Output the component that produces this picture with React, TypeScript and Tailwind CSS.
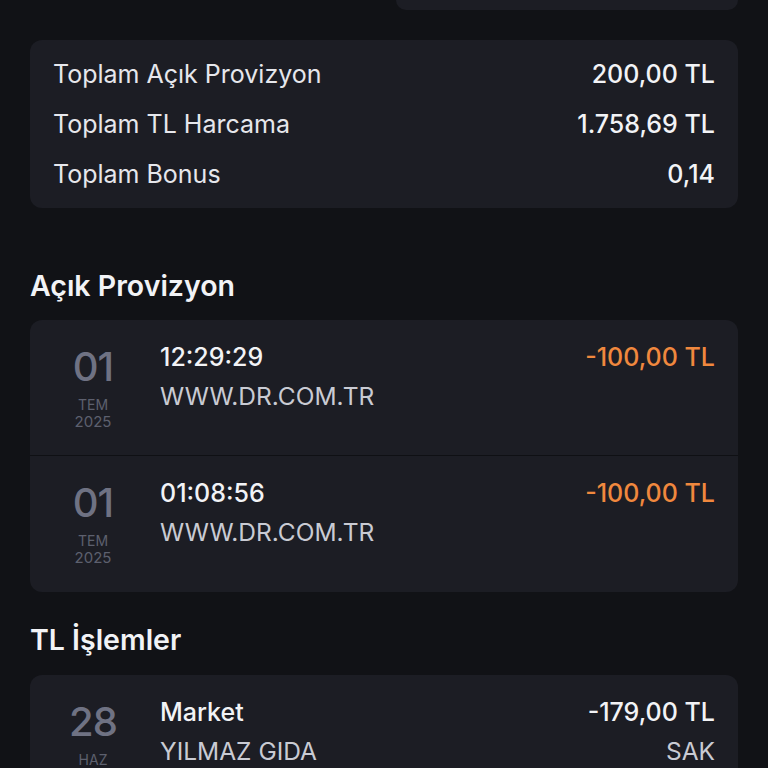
import React from "react";

const font = { fontFamily: "Inter, 'Noto Sans', sans-serif" };

function DateBlock({ day, mon, year }: { day: string; mon: string; year?: string }) {
  return (
    <div className="w-[80px] flex flex-col items-center shrink-0 pt-[5px]">
      <div className="text-[40px] leading-[40px] font-medium text-[#6f7283] tracking-[-1px]">{day}</div>
      <div className="text-[14px] leading-[17px] text-[#5d606e] mt-[9px]">{mon}</div>
      {year && <div className="text-[15px] leading-[17px] text-[#5d606e]">{year}</div>}
    </div>
  );
}

function Row({ day, mon, year, title, sub, amount, amountClass, right2, border }: any) {
  return (
    <div className={`flex px-[23px] pt-[22px] h-[136px] ${border ? "border-b border-[#0f1014]" : ""}`}>
      <DateBlock day={day} mon={mon} year={year} />
      <div className="flex-1 ml-[27px] flex flex-col">
        <div className="flex justify-between items-center h-[32px]">
          <span className="text-[25px] font-medium text-[#f2f3f6]">{title}</span>
          <span className={`text-[25px] font-medium ${amountClass}`}>{amount}</span>
        </div>
        <div className="flex justify-between items-center h-[32px] mt-[6px]">
          <span className="text-[24.5px] text-[#c9cbd3]">{sub}</span>
          {right2 && <span className="text-[24.5px] text-[#c9cbd3]">{right2}</span>}
        </div>
      </div>
    </div>
  );
}

export default function App() {
  return (
    <div style={font} className="w-[768px] h-[768px] overflow-hidden bg-[#111216] text-white">
      <div className="flex justify-end pr-[30px]">
        <div className="w-[342px] h-[10px] bg-[#1c1d24] rounded-b-[12px]" />
      </div>
      <div className="mx-[30px] mt-[30px] bg-[#1c1d24] rounded-[12px] px-[23px] pt-[10px] pb-[8px]">
        {[
          ["Toplam Açık Provizyon", "200,00 TL"],
          ["Toplam TL Harcama", "1.758,69 TL"],
          ["Toplam Bonus", "0,14"],
        ].map(([a, b]) => (
          <div key={a} className="flex justify-between items-center h-[50px]">
            <span className="text-[25px] text-[#e6e7ec]">{a}</span>
            <span className="text-[25px] font-medium text-[#f2f3f6]">{b}</span>
          </div>
        ))}
      </div>
      <div className="px-[30px] mt-[60px] h-[36px] flex items-center text-[28.5px] font-semibold text-[#f2f3f6]">
        Açık Provizyon
      </div>
      <div className="mx-[30px] mt-[16px] bg-[#1c1d24] rounded-[12px] overflow-hidden">
        <Row day="01" mon="TEM" year="2025" title="12:29:29" sub="WWW.DR.COM.TR" amount="-100,00 TL" amountClass="text-[#f0883e]" border />
        <Row day="01" mon="TEM" year="2025" title="01:08:56" sub="WWW.DR.COM.TR" amount="-100,00 TL" amountClass="text-[#f0883e]" />
      </div>
      <div className="px-[30px] mt-[30px] h-[36px] flex items-center text-[28.5px] font-semibold text-[#f2f3f6]">
        TL İşlemler
      </div>
      <div className="mx-[30px] mt-[17px] bg-[#1c1d24] rounded-[12px] overflow-hidden">
        <Row day="28" mon="HAZ" title="Market" sub="YILMAZ GIDA" amount="-179,00 TL" amountClass="text-[#f2f3f6]" right2="SAK" />
      </div>
    </div>
  );
}
